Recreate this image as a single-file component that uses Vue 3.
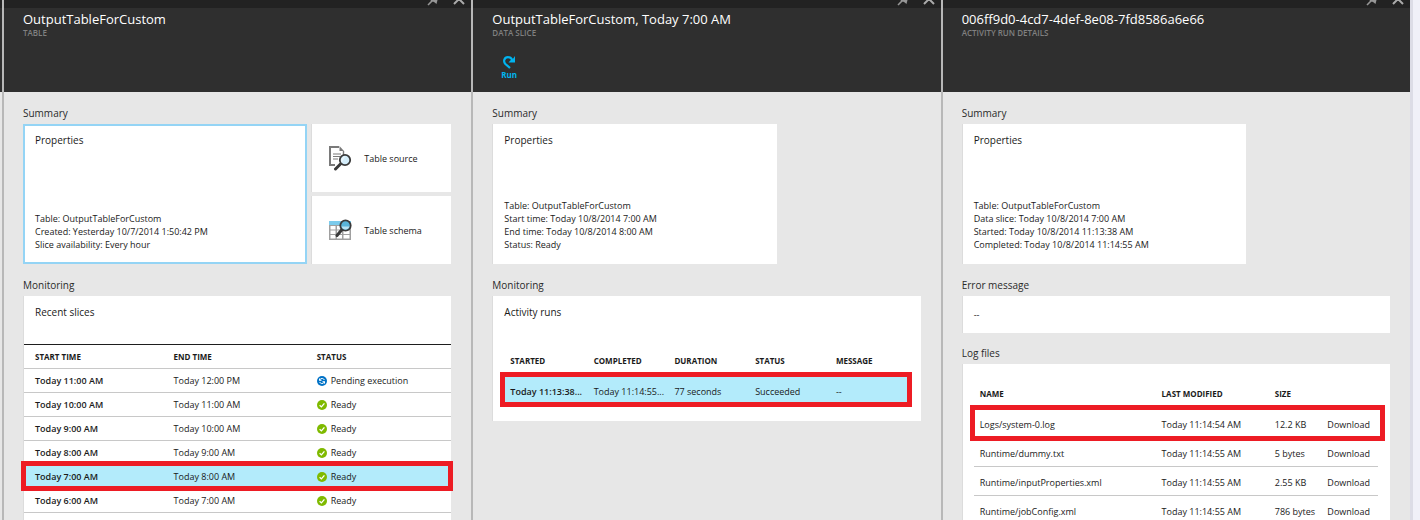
<script setup>
const slices = [
  { start: 'Today 11:00 AM', end: 'Today 12:00 PM', status: 'Pending execution', pending: true },
  { start: 'Today 10:00 AM', end: 'Today 11:00 AM', status: 'Ready' },
  { start: 'Today 9:00 AM', end: 'Today 10:00 AM', status: 'Ready' },
  { start: 'Today 8:00 AM', end: 'Today 9:00 AM', status: 'Ready' },
  { start: 'Today 7:00 AM', end: 'Today 8:00 AM', status: 'Ready', selected: true },
  { start: 'Today 6:00 AM', end: 'Today 7:00 AM', status: 'Ready' },
]

const logs = [
  { name: 'Logs/system-0.log', modified: 'Today 11:14:54 AM', size: '12.2 KB', marked: true },
  { name: 'Runtime/dummy.txt', modified: 'Today 11:14:55 AM', size: '5 bytes' },
  { name: 'Runtime/inputProperties.xml', modified: 'Today 11:14:55 AM', size: '2.55 KB' },
  { name: 'Runtime/jobConfig.xml', modified: 'Today 11:14:55 AM', size: '786 bytes' },
]

const blades = [
  {
    id: 'table',
    title: 'OutputTableForCustom',
    kind: 'TABLE',
    props: ['Table: OutputTableForCustom', 'Created: Yesterday 10/7/2014 1:50:42 PM', 'Slice availability: Every hour'],
  },
  {
    id: 'slice',
    title: 'OutputTableForCustom, Today 7:00 AM',
    kind: 'DATA SLICE',
    props: ['Table: OutputTableForCustom', 'Start time: Today 10/8/2014 7:00 AM', 'End time: Today 10/8/2014 8:00 AM', 'Status: Ready'],
  },
  {
    id: 'run',
    title: '006ff9d0-4cd7-4def-8e08-7fd8586a6e66',
    kind: 'ACTIVITY RUN DETAILS',
    props: ['Table: OutputTableForCustom', 'Data slice: Today 10/8/2014 7:00 AM', 'Started: Today 10/8/2014 11:13:38 AM', 'Completed: Today 10/8/2014 11:14:55 AM'],
  },
]
</script>

<template>
  <main class="portal">
    <div class="edge"></div>
    <section v-for="blade in blades" :key="blade.id" class="blade">
      <header class="head">
        <div class="chrome">
          <button type="button" class="tool" aria-label="Pin">
            <svg width="14" height="14" viewBox="0 0 14 14">
              <path d="M2 13L7 8" stroke="#969696" stroke-width="1.6" />
              <path d="M3 5L8 1l4 5-1.500 6-2.500-2-3-1z" fill="#969696" />
            </svg>
          </button>
          <button type="button" class="tool" aria-label="Close">
            <svg width="14" height="14" viewBox="0 0 14 14">
              <path d="M2 2l10 10M12 2L2 12" fill="none" stroke="#aaa" stroke-width="2" />
            </svg>
          </button>
        </div>
        <h1 class="title">{{ blade.title }}</h1>
        <p class="kind">{{ blade.kind }}</p>
        <button v-if="blade.id === 'slice'" type="button" class="run-button">
          <svg width="14" height="14" viewBox="0 0 14 14">
            <path d="M8 13L3.400 9C1 6.300 2.200 2.200 6 2.200c2 0 3.400 1 4.400 2.800" fill="none" stroke="#00b4f0" stroke-width="2.200" />
            <path d="M13 1v6.500H6.500l2-2.200 2-.800z" fill="#00b4f0" />
          </svg>
          <span>Run</span>
        </button>
      </header>

      <div class="body">
        <h2 class="label">Summary</h2>
        <div class="tiles">
          <article class="tile props" :class="{ active: blade.id === 'table' }">
            <h3 class="tile-title">Properties</h3>
            <ul class="lines">
              <li v-for="line in blade.props" :key="line">{{ line }}</li>
            </ul>
          </article>
          <div v-if="blade.id === 'table'" class="stack">
            <button type="button" class="tile link-tile">
              <svg width="24" height="26" viewBox="0 0 24 26">
                <path d="M11 2H2v18h5" fill="none" stroke="#7a7a7a" stroke-width="2" />
                <path d="M15.500 6v4" fill="none" stroke="#7a7a7a" stroke-width="1.400" />
                <path d="M11.500 1l4.500 5h-4.500z" fill="#7a7a7a" />
                <path d="M5 9h8M5 11.500h7M5 14h5" stroke="#7a7a7a" stroke-width="1.200" />
                <path d="M12.500 19L7.500 24" stroke="#3a3a3a" stroke-width="3" stroke-linecap="round" />
                <circle cx="17" cy="15" r="5.200" fill="#d3edfa" stroke="#3a3a3a" stroke-width="1.800" />
                <path d="M13.500 18a5 5 0 0 1 4-7z" fill="#fff" opacity=".5" />
              </svg>
              <span>Table source</span>
            </button>
            <button type="button" class="tile link-tile">
              <svg width="24" height="26" viewBox="0 0 24 26">
                <rect x="1" y="5" width="22" height="18" fill="#a0a0a0" />
                <rect x="1" y="4" width="22" height="4" fill="#7ccbec" />
                <path d="M2.500 9h5v3.500h-5zM9 9h5v3.500H9zM15.500 9h6v3.500h-6zM2.500 13.500h5v3.500h-5zM9 13.500h5v3.500H9zM15.500 13.500h6v3.500h-6zM2.500 18h5v3.500h-5zM9 18h5v3.500H9zM15.500 18h6v3.500h-6z" fill="#fff" />
                <path d="M14 12.500L9 18.500" stroke="#3a3a3a" stroke-width="3" stroke-linecap="round" />
                <circle cx="17.500" cy="8.500" r="5.200" fill="#59b4d9" stroke="#3a3a3a" stroke-width="1.800" />
                <path d="M13.500 9.500h8a4.200 4.200 0 0 1-8 0z" fill="#b8e2f3" />
              </svg>
              <span>Table schema</span>
            </button>
          </div>
        </div>

        <template v-if="blade.id === 'table'">
          <h2 class="label">Monitoring</h2>
          <article class="tile slices-tile">
            <h3 class="tile-title bar">Recent slices</h3>
            <table class="grid slices">
              <colgroup><col class="s1" /><col class="s2" /><col class="s3" /></colgroup>
              <thead>
                <tr><th>START TIME</th><th>END TIME</th><th>STATUS</th></tr>
              </thead>
              <tbody>
                <tr v-for="s in slices" :key="s.start" :class="{ selected: s.selected }">
                  <td class="strong">{{ s.start }}</td>
                  <td>{{ s.end }}</td>
                  <td>
                    <span class="status">
                      <svg width="10" height="10" viewBox="0 0 10 10">
                        <circle cx="5" cy="5" r="5" :fill="s.pending ? '#0072c6' : '#7fba00'" />
                        <path v-if="s.pending" d="M2.500 4.600V2.500M2.500 4.300h2M3 3.600C4 2 6.500 2 7.400 4M7.500 5.400v2.100M7.500 5.700h-2M7 6.400C6 8 3.500 8 2.600 6" fill="none" stroke="#fff" stroke-width="1" />
                        <path v-else d="M2.600 5.200l1.800 1.700 3-3.600" fill="none" stroke="#fff" stroke-width="1.300" />
                      </svg>
                      {{ s.status }}
                    </span>
                  </td>
                </tr>
              </tbody>
            </table>
          </article>
        </template>

        <template v-else-if="blade.id === 'slice'">
          <h2 class="label">Monitoring</h2>
          <article class="tile inset runs-tile">
            <h3 class="tile-title">Activity runs</h3>
            <table class="grid runs">
              <colgroup><col class="r1" /><col /><col /><col /><col /></colgroup>
              <thead>
                <tr><th>STARTED</th><th>COMPLETED</th><th>DURATION</th><th>STATUS</th><th>MESSAGE</th></tr>
              </thead>
              <tbody>
                <tr class="selected">
                  <td class="strong">Today 11:13:38...</td>
                  <td>Today 11:14:55...</td>
                  <td>77 seconds</td>
                  <td>Succeeded</td>
                  <td>--</td>
                </tr>
              </tbody>
            </table>
          </article>
        </template>

        <template v-else>
          <h2 class="label">Error message</h2>
          <article class="tile error">--</article>
          <h2 class="label">Log files</h2>
          <article class="tile inset logs-tile">
            <table class="grid logs">
              <colgroup><col class="l1" /><col class="l2" /><col class="l3" /><col /></colgroup>
              <thead>
                <tr><th>NAME</th><th>LAST MODIFIED</th><th>SIZE</th><th></th></tr>
              </thead>
              <tbody>
                <tr v-for="l in logs" :key="l.name" :class="{ marked: l.marked }">
                  <td>{{ l.name }}</td>
                  <td>{{ l.modified }}</td>
                  <td>{{ l.size }}</td>
                  <td><a href="#">Download</a></td>
                </tr>
              </tbody>
            </table>
          </article>
        </template>
      </div>
    </section>
    <div class="rail"></div>
  </main>
</template>

<style>
body {
  margin: 0;
  overflow: hidden;
}
</style>

<style scoped>
.portal {
  display: flex;
  height: 100vh;
  overflow: hidden;
  background: #e7e7e7;
  color: #1a1a1a;
  font: 9px/13px "Open Sans", "Noto Sans", sans-serif;
}
.edge {
  width: 2px;
  background: linear-gradient(#222 8px, #2f2f2f 8px, #2f2f2f 92px, #e7e7e7 92px);
}
.rail {
  width: 7px;
  border-left: 3px solid #dcdce6;
  background: #f0f0f8;
}
.blade {
  flex: 1;
  min-width: 0;
  border-left: 2px solid #b8b8b8;
}
h1, h2, h3, p, ul {
  margin: 0;
  padding: 0;
  font-weight: 400;
}
ul {
  list-style: none;
}
button {
  font: inherit;
  color: inherit;
  border: 0;
  padding: 0;
  background: none;
}
a {
  color: inherit;
  text-decoration: none;
}
svg {
  flex: none;
}
.head {
  height: 92px;
  box-sizing: border-box;
  padding-left: 19px;
  background: #2f2f2f;
  color: #fff;
}
.chrome {
  display: flex;
  justify-content: flex-end;
  align-items: flex-end;
  gap: 12px;
  box-sizing: border-box;
  height: 8px;
  margin-left: -19px;
  padding: 0 5px 2px 0;
  background: #222;
  overflow: hidden;
}
.tool {
  display: flex;
  align-items: flex-end;
  height: 14px;
  flex: none;
}
.title {
  padding-top: 2px;
  font-size: 13px;
  line-height: 18px;
}
.kind {
  font-size: 8px;
  line-height: 10px;
  font-weight: 600;
  color: #808080;
}
.run-button {
  display: flex;
  flex-direction: column;
  align-items: center;
  margin: 17px 0 0 9px;
  color: #00b4f0;
  font-size: 8px;
  line-height: 12px;
  font-weight: 700;
}
.body {
  padding: 12px 20px 0 19px;
}
.label {
  height: 20px;
  font-size: 10px;
  line-height: 18px;
  color: #2a2a2a;
}
.tiles {
  display: grid;
  grid-template-columns: repeat(3, 1fr);
  gap: 4px;
  margin-bottom: 12px;
}
.tile {
  box-sizing: border-box;
  border-left: 1px solid #dcdcdc;
  background: #fff;
}
.props {
  grid-column: span 2;
  display: flex;
  flex-direction: column;
  justify-content: space-between;
  height: 140px;
  padding-bottom: 13px;
}
.props.active {
  border: 2px solid #94d4f5;
  padding-bottom: 11px;
}
.props.active .tile-title {
  padding: 6px 10px 0;
}
.props.active .lines {
  padding-left: 10px;
}
.tile-title {
  padding: 8px 11px 0;
  font-size: 10px;
  line-height: 16px;
}
.lines {
  padding-left: 11px;
}
.stack {
  display: flex;
  flex-direction: column;
  gap: 4px;
}
.link-tile {
  flex: 1;
  display: flex;
  align-items: center;
  gap: 12px;
  padding-left: 16px;
}
.slices-tile {
  padding-bottom: 24px;
}
.bar {
  height: 49px;
  box-sizing: border-box;
  border-bottom: 1px solid #1e1e1e;
}
.grid {
  width: 100%;
  table-layout: fixed;
  border-collapse: separate;
  border-spacing: 0;
}
th, td {
  padding: 0;
  text-align: left;
  white-space: nowrap;
  box-sizing: border-box;
  border-bottom: 1px solid #c8c8c8;
}
th {
  font-size: 8px;
  font-weight: 700;
}
tr.selected td {
  background: #b3ebfb;
}
tr.selected, tr.marked {
  position: relative;
}
tr.selected td:first-child::after, tr.marked td:first-child::after {
  content: "";
  position: absolute;
  border: 5px solid #ed1c24;
}
.strong {
  font-weight: 600;
}
.slices th, .slices td {
  height: 24px;
  padding-left: 11px;
}
.slices th + th, .slices td + td {
  padding-left: 0;
}
.slices tr.selected td:first-child::after {
  inset: -4px -2px -2px -3px;
}
.s1 { width: 35%; }
.s2 { width: 33.500%; }
.status {
  display: flex;
  align-items: center;
  gap: 4px;
}
.inset {
  padding: 0 12px 0 11px;
}
.inset .tile-title {
  padding-left: 0;
}
.inset th {
  height: 32px;
  border: 0;
}
.inset th, .inset td {
  padding-left: 6px;
}
.runs-tile {
  padding: 0 10px 15px 11px;
}
.runs {
  margin-top: 24px;
}
.runs td {
  height: 30px;
  border: 0;
}
.runs .selected td:first-child::after {
  inset: -4px -1px -1px -4px;
}
.r1 { width: 20.500%; }
.error {
  padding: 12px 11px;
  margin-bottom: 11px;
}
.logs-tile {
  padding-top: 13px;
}
.logs td {
  height: 29px;
  padding-top: 2px;
}
.logs .marked td:first-child::after {
  inset: -4px -7px -3px -4px;
}
.l1 { width: 45%; }
.l2 { width: 28%; }
.l3 { width: 13%; }
</style>
